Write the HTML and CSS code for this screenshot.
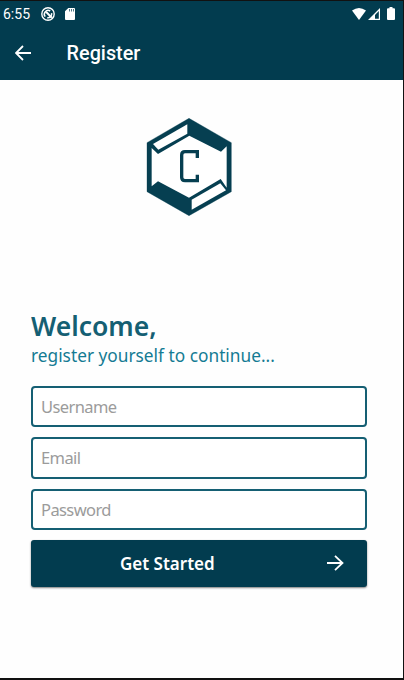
FILE: index.html
```html
<!DOCTYPE html>
<html lang="en">
<head>
<meta charset="utf-8">
<title>Register</title>
<link rel="stylesheet" href="styles.css">
</head>
<body>
<div class="screen">
  <div class="status">
    <span class="clock">6:55</span>
    <svg class="sync" width="14" height="14" viewBox="0 0 14 14"><circle cx="7" cy="7" r="6.2" fill="none" stroke="#fff" stroke-width="1.4"/><path d="M4.2 9.6A3.8 3.8 0 0 1 9.2 4M10.6 6.2A3.8 3.8 0 0 1 6.2 10.7" fill="none" stroke="#fff" stroke-width="1.5"/><path d="M5 4.8L10.8 10.8" stroke="#fff" stroke-width="2"/></svg>
    <svg class="card" width="10" height="12" viewBox="0 0 10 12"><path d="M3.3 0H9a1 1 0 0 1 1 1v10a1 1 0 0 1-1 1H1a1 1 0 0 1-1-1V3.3z" fill="#fff"/><path d="M4.5 1v2.5M6.5 1v2.5M8.5 1v2.5" stroke="#023c4f" stroke-width=".7"/></svg>
    <svg class="wifi" width="14" height="12" viewBox="0 0 14 12"><path d="M0 2.5Q7-2.5 14 2.5L7 12z" fill="#fff"/></svg>
    <svg class="signal" width="12" height="12" viewBox="0 0 12 12"><path d="M0 12L12 0V12z" fill="#fff"/><path d="M7 7L10.8 3V10.8H7z" fill="#023c4f"/></svg>
    <svg class="battery" width="8" height="13" viewBox="0 0 8 13"><path d="M2.5 0h3v1.3H7a1 1 0 0 1 1 1V12a1 1 0 0 1-1 1H1a1 1 0 0 1-1-1V2.3a1 1 0 0 1 1-1h1.5z" fill="#fff"/></svg>
  </div>
  <header class="bar">
    <svg class="back" width="17" height="16" viewBox="0 0 17 16"><path d="M16 8H1.5M8 1L1 8l7 7" fill="none" stroke="#fff" stroke-width="1.8"/></svg>
    <h1>Register</h1>
  </header>
  <main>
    <svg class="logo" width="110" height="115" viewBox="0 0 330 345">
      <path d="M162 25L289 98V245L162 317L36 245V98z" fill="#063f51" stroke="#063f51" stroke-width="1"/>
      <g fill="#fff">
        <path d="M54 102L157 43V71L70 119z"/>
        <path d="M50 114L69 132L163 77L258 125L275 109V233L257 207L162 263L69 214L50 229z"/>
        <path d="M170 269L256 220L273 241L170 299z"/>
      </g>
      <path d="M187 144V125H150Q140 125 140 135V202Q140 212 150 212H187V194" fill="none" stroke="#063f51" stroke-width="10"/>
    </svg>
    <h2><span>Welcome,</span></h2>
    <p><span>register yourself to continue...</span></p>
    <form>
      <input class="field" type="text" placeholder="Username">
      <input class="field" type="text" placeholder="Email">
      <input class="field" type="text" placeholder="Password">
      <button type="button"><span>Get Started</span><svg class="next" width="17" height="16" viewBox="0 0 17 16"><path d="M0 8h15.5M8 .8L15.5 8L8 15.2" fill="none" stroke="#fff" stroke-width="1.8"/></svg></button>
    </form>
  </main>
</div>
</body>
</html>
```
FILE: styles.css
```css
* { box-sizing: border-box; }
body { margin: 0; }
.screen {
  width: 404px;
  height: 680px;
  border: solid #111;
  border-width: 1px 1px 2px 0;
  background: #fefefe;
  overflow: hidden;
}
svg { display: block; flex: none; }
.status {
  display: flex;
  align-items: center;
  height: 25px;
  padding: 0 8px 0 3px;
  background: #023c4f;
}
.clock {
  width: 38px;
  color: #fff;
  font: 14px/24px Roboto, sans-serif;
}
.card { margin-left: 10px; }
.wifi { margin-left: auto; }
.signal { margin-left: 2px; }
.battery { margin-left: 7px; }
.bar {
  display: flex;
  align-items: center;
  height: 54px;
  padding-left: 15px;
  background: #023c4f;
}
h1 {
  margin: 1px 0 0 34.6px;
  color: #fff;
  font: 500 19.8px/26px Roboto, sans-serif;
}
main {
  display: flex;
  flex-direction: column;
  padding: 30px 36px 0 31px;
  font-family: "Noto Sans", "Open Sans", sans-serif;
}
.logo { margin-left: 104px; }
h2 {
  margin: 83px 0 0;
  color: #155f73;
  font-size: 27px;
  font-weight: 600;
  line-height: 36px;
}
p {
  margin: 0;
  color: #147b93;
  font-size: 18px;
  line-height: 23px;
  white-space: nowrap;
}
h2 span, p span {
  display: inline-block;
  transform-origin: left;
}
h2 span { transform: scaleX(.98); }
p span { transform: scaleX(.96); }
form {
  display: flex;
  flex-direction: column;
  gap: 10px;
  margin-top: 19px;
}
.field {
  width: 336px;
  height: 41.3px;
  padding: 0 8px;
  border: 2px solid #155f73;
  border-radius: 4px;
  background: #fff;
  font: 16.5px "Noto Sans", "Open Sans", sans-serif;
  letter-spacing: -.6px;
}
.field::placeholder { color: #9b9b9b; opacity: 1; }
button {
  display: flex;
  align-items: center;
  width: 336px;
  height: 47px;
  padding: 0 23px 0 89px;
  border: 0;
  border-radius: 3px;
  background: #023c4f;
  box-shadow: 0 1px 2px rgba(0, 0, 0, .5);
  color: #fff;
  font: 600 17px "Noto Sans", "Open Sans", sans-serif;
}
.next { margin-left: auto; }
```
